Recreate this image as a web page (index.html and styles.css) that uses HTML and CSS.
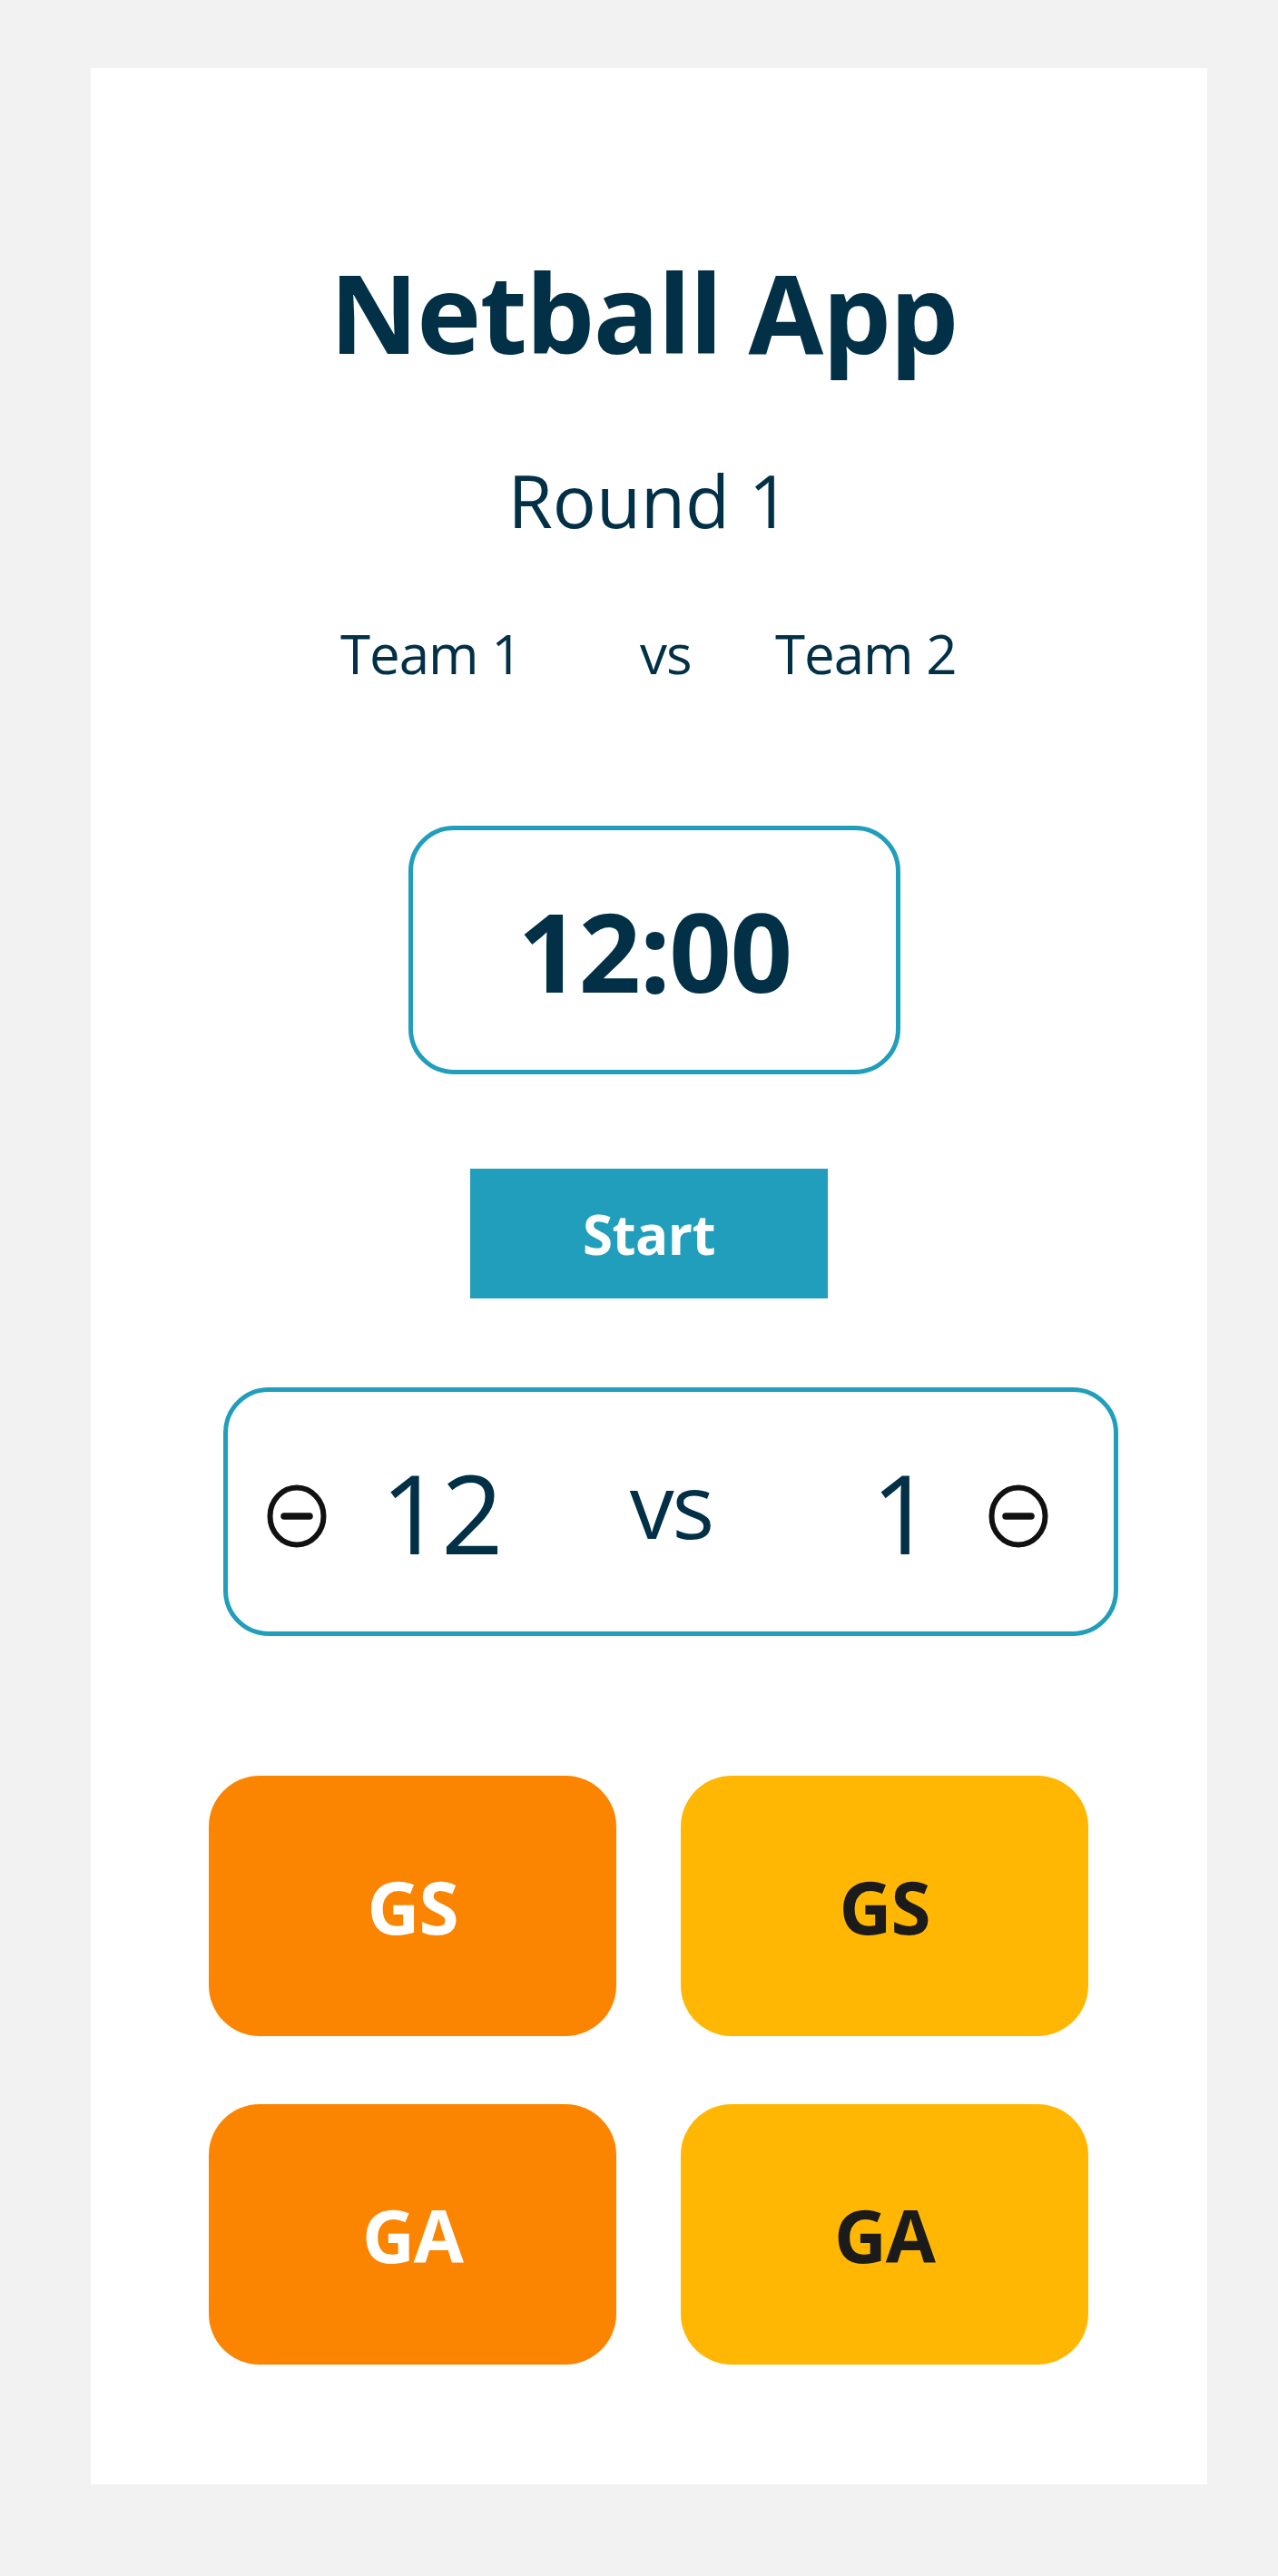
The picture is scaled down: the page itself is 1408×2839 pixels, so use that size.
FILE: index.html
```html
<!DOCTYPE html>
<html lang="en">
<head>
<meta charset="utf-8">
<title>Netball App</title>
<link rel="stylesheet" href="styles.css">
</head>
<body>
<main class="card">
  <h1 class="title">Netball App</h1>
  <h2 class="round">Round 1</h2>
  <div class="teams">
    <span class="team">Team 1</span>
    <span class="team">vs</span>
    <span class="team">Team 2</span>
  </div>
  <div class="timer">12:00</div>
  <button class="start">Start</button>
  <div class="score">
    <span class="cell">
      <svg class="minus" viewBox="0 0 66 70" width="66" height="70" aria-hidden="true">
        <ellipse cx="33" cy="35" rx="29.5" ry="31.5" fill="none" stroke="#111" stroke-width="6"/>
        <line x1="19" y1="35" x2="47" y2="35" stroke="#111" stroke-width="7.5" stroke-linecap="round"/>
      </svg>
    </span>
    <span class="cell num">12</span>
    <span class="cell vs">vs</span>
    <span class="cell num">1</span>
    <span class="cell">
      <svg class="minus" viewBox="0 0 66 70" width="66" height="70" aria-hidden="true">
        <ellipse cx="33" cy="35" rx="29.5" ry="31.5" fill="none" stroke="#111" stroke-width="6"/>
        <line x1="19" y1="35" x2="47" y2="35" stroke="#111" stroke-width="7.5" stroke-linecap="round"/>
      </svg>
    </span>
  </div>
  <div class="positions">
    <button class="pos pos-home">GS</button>
    <button class="pos pos-away">GS</button>
    <button class="pos pos-home">GA</button>
    <button class="pos pos-away">GA</button>
  </div>
</main>
</body>
</html>
```

FILE: styles.css
```css
html, body {
  margin: 0;
  padding: 0;
  background: #f2f2f2;
}

body {
  font-family: "Open Sans", "Noto Sans", sans-serif;
  color: #023047;
  padding-top: 75px;
  padding-bottom: 101px;
}

.card {
  display: block;
  margin-left: 100px;
  width: 1230px;
  background: #ffffff;
  padding-bottom: 132px;
  overflow: hidden;
}

.title {
  margin: 187px 0 0;
  padding-right: 12px;
  font-size: 120px;
  line-height: 163px;
  font-weight: 700;
  letter-spacing: -1.5px;
  text-align: center;
}

.round {
  margin: 69px 0 0;
  font-size: 80px;
  line-height: 114px;
  font-weight: 400;
  text-align: center;
}

.teams {
  margin-top: 71px;
  display: grid;
  grid-template-columns: 330px 149px auto;
  justify-content: start;
  padding-left: 275px;
  font-size: 60px;
  line-height: 82px;
  font-weight: 400;
  letter-spacing: -1px;
}

.timer {
  margin: 149px 0 0 350px;
  width: 532px;
  height: 264px;
  border: 5px solid #219ebc;
  border-radius: 50px;
  display: flex;
  align-items: center;
  justify-content: center;
  font-size: 120px;
  line-height: 163px;
  font-weight: 700;
  letter-spacing: -1.5px;
}

.start {
  display: block;
  margin: 104px auto 0;
  width: 394px;
  height: 143px;
  border: 0;
  padding: 0;
  background: #219ebc;
  color: #ffffff;
  font-family: "Open Sans", "Noto Sans", sans-serif;
  font-size: 60px;
  line-height: 82px;
  font-weight: 700;
  letter-spacing: -0.5px;
}

.score {
  margin: 98px 0 0 146px;
  width: 976px;
  height: 264px;
  border: 5px solid #219ebc;
  border-radius: 50px;
  display: grid;
  grid-template-columns: 152px 166px 331px 186px 71px;
  align-items: center;
  justify-items: center;
}

.cell {
  display: block;
}

.num {
  font-size: 120px;
  line-height: 163px;
  font-weight: 400;
  letter-spacing: -2px;
}

.vs {
  font-size: 98px;
  line-height: 134px;
  font-weight: 400;
  letter-spacing: -2px;
  margin-bottom: 16px;
  margin-left: 10px;
}

.minus {
  display: block;
  margin-top: 10px;
}

.positions {
  margin: 154px 0 0 130px;
  display: grid;
  grid-template-columns: 449px 449px;
  grid-template-rows: 287px 287px;
  column-gap: 71px;
  row-gap: 75px;
}

.pos {
  border: 0;
  padding: 0;
  border-radius: 56px;
  font-family: "Open Sans", "Noto Sans", sans-serif;
  font-size: 80px;
  line-height: 109px;
  font-weight: 700;
  letter-spacing: -1px;
}

.pos-home {
  background: #fb8500;
  color: #ffffff;
}

.pos-away {
  background: #ffb703;
  color: #1b1b1b;
}
```
